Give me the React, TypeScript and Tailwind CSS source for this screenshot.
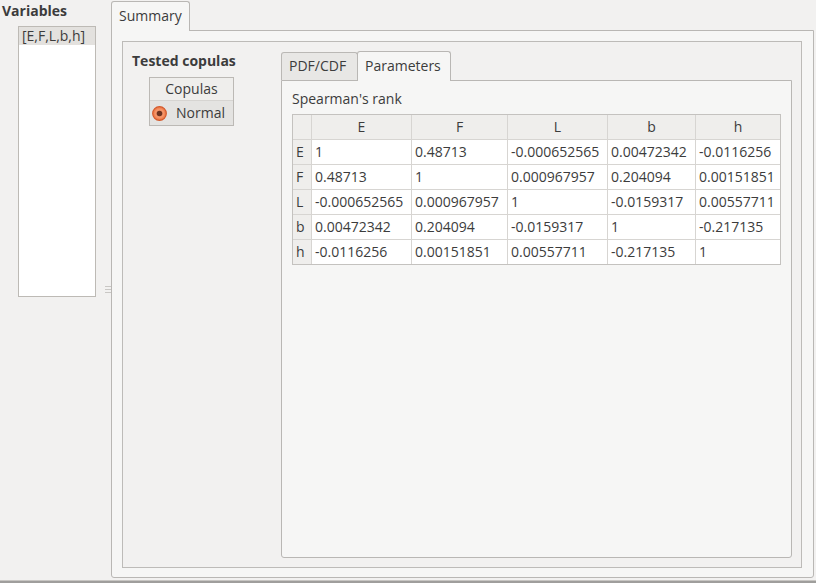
const COLS = ['E', 'F', 'L', 'b', 'h'];

const ROWS: string[][] = [
  ['1', '0.48713', '-0.000652565', '0.00472342', '-0.0116256'],
  ['0.48713', '1', '0.000967957', '0.204094', '0.00151851'],
  ['-0.000652565', '0.000967957', '1', '-0.0159317', '0.00557711'],
  ['0.00472342', '0.204094', '-0.0159317', '1', '-0.217135'],
  ['-0.0116256', '0.00151851', '0.00557711', '-0.217135', '1'],
];

function RadioOn() {
  return (
    <svg width="15" height="15" viewBox="0 0 15 15" className="shrink-0">
      <circle cx="7.5" cy="7.5" r="6.8" fill="#f0804f" stroke="#d4582a" strokeWidth="1.2" />
      <circle cx="7.5" cy="7.5" r="5" fill="#f59468" />
      <circle cx="7.5" cy="7.5" r="2.8" fill="#6e3320" />
    </svg>
  );
}

export default function App() {
  return (
    <div className="w-[816px] h-[583px] bg-[#f2f1f0] flex flex-col font-['Open_Sans',sans-serif] text-[14px] text-[#3c3c3c] overflow-hidden">
      <div className="flex flex-1 min-h-0">
        {/* Variables list */}
        <div className="w-[105px] flex flex-col">
          <div className="pl-[2px] h-[26px] font-bold leading-[22px]">Variables</div>
          <div className="ml-[18px] w-[78px] h-[271px] border border-[#bdbab5] bg-white">
            <div className="h-[18px] bg-[#e3e1de] pl-[3px] leading-[17px]">[E,F,L,b,h]</div>
          </div>
        </div>

        {/* Splitter handle */}
        <div className="w-[6px] flex flex-col gap-[2px] pt-[286px]">
          <div className="h-px bg-[#c9c7c4]" />
          <div className="h-px bg-[#c9c7c4]" />
          <div className="h-px bg-[#c9c7c4]" />
        </div>

        {/* Main tab widget */}
        <div className="flex-1 flex flex-col pt-[1px] pr-[2px] pb-[2px]">
          <div className="flex h-[29px]">
            <div className="relative z-10 w-[79px] h-[30px] px-[7px] leading-[28px] border border-b-0 border-[#b9b7b4] rounded-t-[3px] bg-[#f6f6f5]">
              Summary
            </div>
          </div>
          <div className="flex-1 flex border border-[#b9b7b4] rounded-b-[3px] bg-[#f6f6f5] pt-[10px] pl-[10px] pr-[11px] pb-[9px]">
            <div className="flex-1 flex border border-[#bdbbb8] bg-[#f2f1f0]">
              {/* Tested copulas */}
              <div className="w-[158px] flex flex-col pt-[9px]">
                <div className="pl-[9px] font-bold leading-[20px] h-[26px]">Tested copulas</div>
                <div className="ml-[26px] w-[85px] border border-[#bcb9b5] bg-white">
                  <div className="h-[23px] bg-[#efeeec] border-b border-[#d6d4d1] text-center leading-[22px]">Copulas</div>
                  <div className="h-[24px] bg-[#e4e3e1] flex items-center gap-[9px] pl-[2px]">
                    <RadioOn />
                    <span className="leading-[22px]">Normal</span>
                  </div>
                </div>
              </div>

              {/* Inner tab widget */}
              <div className="flex-1 flex flex-col pt-[9px] pr-[9px] pb-[9px]">
                <div className="flex items-end h-[29px]">
                  <div className="w-[77px] h-[28px] px-[7px] leading-[26px] border border-b-0 border-[#bab8b5] rounded-t-[3px] bg-[#e8e7e5]">
                    PDF/CDF
                  </div>
                  <div className="relative z-10 w-[94px] h-[30px] -ml-px -mb-px px-[7px] leading-[28px] border border-b-0 border-[#b9b7b4] rounded-t-[3px] bg-[#f6f6f5]">
                    Parameters
                  </div>
                </div>
                <div className="flex-1 flex flex-col border border-[#b9b7b4] rounded-b-[3px] bg-[#f6f6f5] pl-[10px] pr-[10px] pt-[8px]">
                  <div className="h-[25px] leading-[20px]">Spearman's rank</div>
                  <div className="w-[489px] border border-[#c4c2bf] bg-[#d7d5d2]">
                    <div className="grid grid-cols-[18px_99px_95px_99px_87px_84px] gap-px">
                      <div className="h-[24px] bg-[#efeeec]" />
                      {COLS.map((c) => (
                        <div key={c} className="h-[24px] bg-[#efeeec] text-center leading-[24px]">
                          {c}
                        </div>
                      ))}
                      {ROWS.map((row, i) => [
                        <div key={`h${i}`} className="h-[24px] bg-[#efeeec] pl-[3px] leading-[24px]">
                          {COLS[i]}
                        </div>,
                        ...row.map((v, j) => (
                          <div key={`${i}-${j}`} className="h-[24px] bg-white pl-[3px] leading-[24px] whitespace-nowrap overflow-hidden">
                            {v}
                          </div>
                        )),
                      ])}
                    </div>
                  </div>
                </div>
              </div>
            </div>
          </div>
        </div>
      </div>
      <div className="h-px bg-[#c8c6c3]" />
      <div className="h-[2px] bg-[#9f9e9c]" />
    </div>
  );
}
